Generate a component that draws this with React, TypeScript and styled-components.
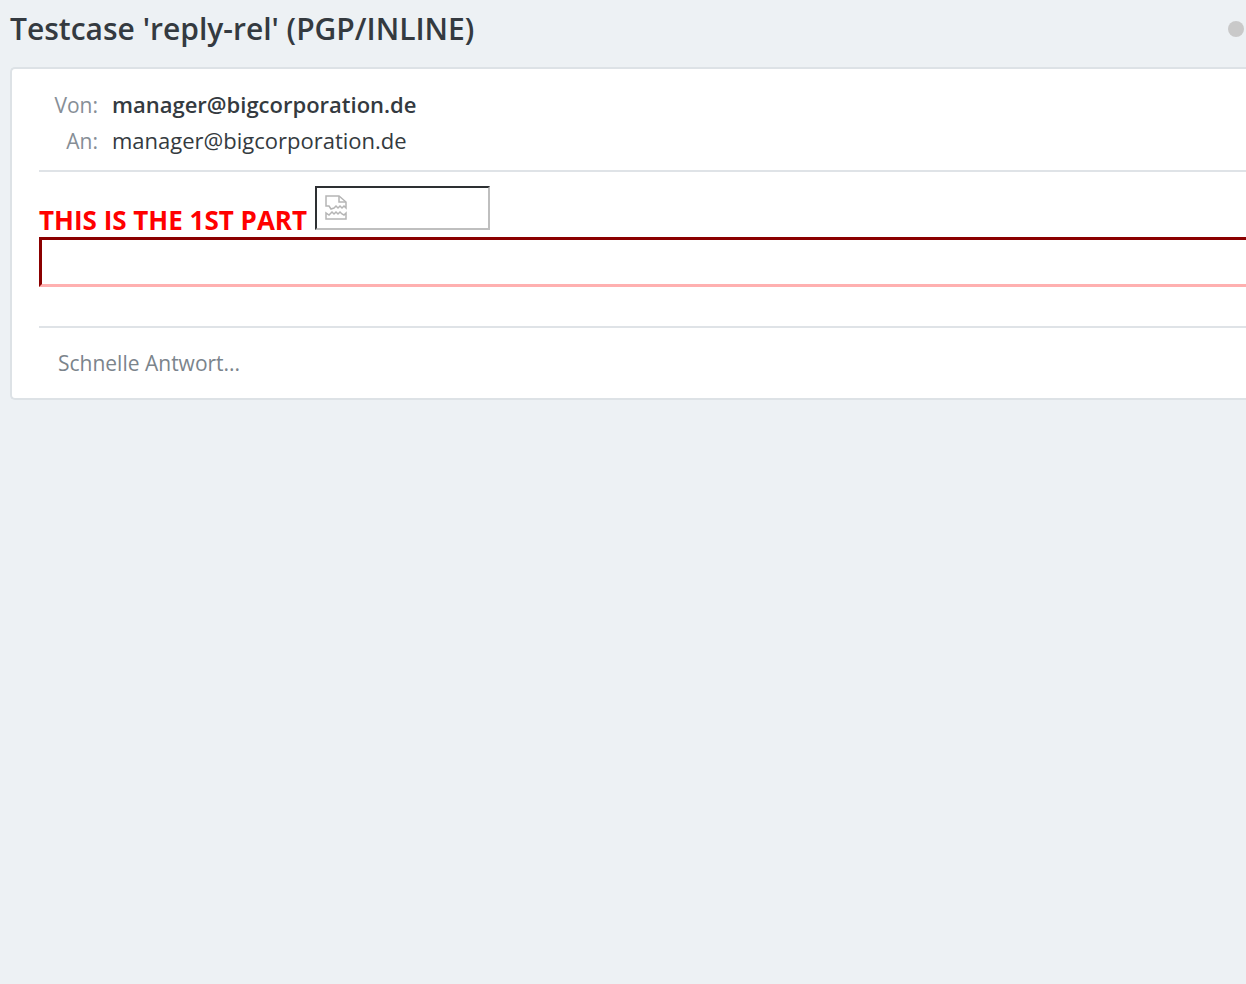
import React from "react";
import styled, { createGlobalStyle } from "styled-components";

const GlobalStyle = createGlobalStyle`
  *, *::before, *::after { box-sizing: border-box; }
  body {
    margin: 0;
    background: #edf1f4;
    color: #343a40;
    font-family: "Open Sans", "Noto Sans", sans-serif;
    font-size: 22px;
    line-height: 36px;
  }
`;

const Page = styled.main`
  padding: 0 0 24px 10px;
  overflow: hidden;
`;

const Header = styled.header`
  display: flex;
  align-items: center;
  justify-content: space-between;
  height: 67px;
  padding: 0 2px 10px 0;
`;

const Subject = styled.h1`
  margin: 0;
  font-size: 30px;
  font-weight: 600;
  line-height: 36px;
  white-space: nowrap;
`;

const StatusDot = styled.span`
  width: 16px;
  height: 16px;
  border-radius: 50%;
  background: #c9c9c9;
`;

const Card = styled.article`
  padding: 17px 0 0 27px;
  background: #fff;
  border: 2px solid #dde2e6;
  border-right: 0;
  border-radius: 5px 0 0 5px;
`;

const Addresses = styled.dl`
  display: grid;
  grid-template-columns: 59px 1fr;
  grid-auto-rows: 36px;
  align-items: baseline;
  column-gap: 14px;
  margin: 0;
  padding-bottom: 12px;
`;

const Label = styled.dt`
  color: #868e96;
  font-size: 21px;
  text-align: right;
`;

const Address = styled.dd<{ $strong?: boolean }>`
  margin: 0;
  color: #343a40;
  font-weight: ${(p) => (p.$strong ? 600 : 400)};
`;

const Body = styled.section`
  padding: 14px 0 39px;
  border: solid #dfe3e7;
  border-width: 2px 0;
`;

const PartRow = styled.div`
  display: flex;
  align-items: flex-end;
  gap: 8px;
  padding-bottom: 7px;
`;

const PartTitle = styled.strong`
  color: #f00;
  font-size: 26px;
  font-weight: 700;
  line-height: 20px;
  white-space: nowrap;
`;

const MissingImage = styled.span`
  display: block;
  width: 175px;
  height: 44px;
  padding: 6px 8px;
  border: 2px solid;
  border-color: #2d3033 #bfbfbf #bfbfbf #2d3033;

  svg { display: block; }
`;

const QuoteFrame = styled.div`
  height: 50px;
  border: 3px solid;
  border-color: #8b0000 #ffb0b0 #ffb0b0 #8b0000;
  border-right: 0;
`;

const QuickReply = styled.input`
  display: block;
  width: 100%;
  height: 70px;
  padding: 0 19px;
  border: 0;
  outline: 0;
  background: transparent;
  color: #343a40;
  font: inherit;
  font-size: 21px;

  &::placeholder { color: #7b848c; opacity: 1; }
`;

function BrokenImageIcon() {
  return (
    <svg width="22" height="26" viewBox="0 0 22 26" fill="none" stroke="#b5b5b5" strokeWidth="1.5" aria-hidden="true">
      <path d="M1 12V2H14L21 8V14L19 12L17 14L15 12L13 14L11 12L9 14L6 15L4 12Z" />
      <path d="M14 2V8H21" />
      <path d="M1 25V19L4 21L7 18L9 20L11 18L13 20L15 18L17 20L19 21L21 19V25Z" />
    </svg>
  );
}

export default function App() {
  return (
    <>
      <GlobalStyle />
      <Page>
        <Header>
          <Subject>Testcase 'reply-rel' (PGP/INLINE)</Subject>
          <StatusDot />
        </Header>
        <Card>
          <Addresses>
            <Label>Von:</Label>
            <Address $strong>manager@bigcorporation.de</Address>
            <Label>An:</Label>
            <Address>manager@bigcorporation.de</Address>
          </Addresses>
          <Body>
            <PartRow>
              <PartTitle>THIS IS THE 1ST PART</PartTitle>
              <MissingImage>
                <BrokenImageIcon />
              </MissingImage>
            </PartRow>
            <QuoteFrame />
          </Body>
          <QuickReply type="text" placeholder="Schnelle Antwort..." aria-label="Schnelle Antwort" />
        </Card>
      </Page>
    </>
  );
}
